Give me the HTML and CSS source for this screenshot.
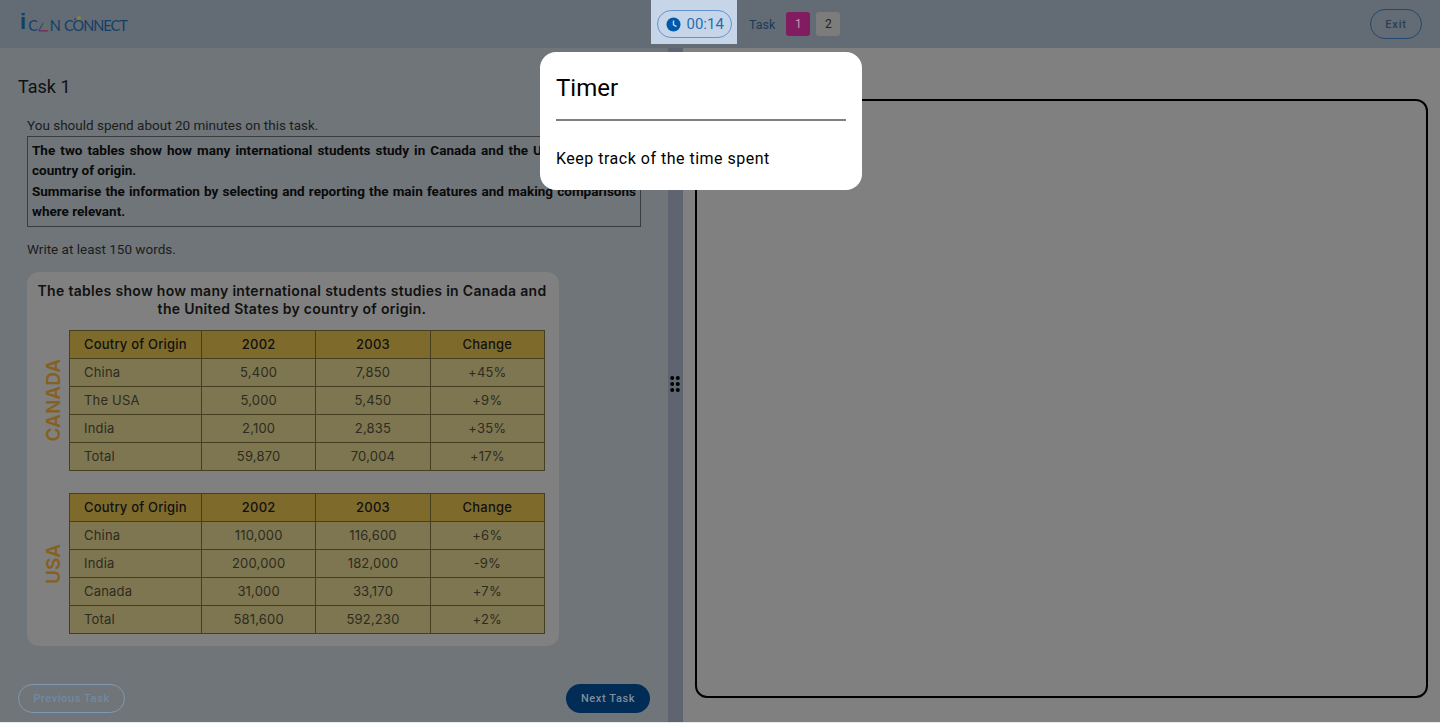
FILE: index.html
```html
<!DOCTYPE html>
<html>
<head>
    <title>Writing Test</title>
    <link rel="stylesheet" href="styles.css">
</head>
<body>
    <div class="app">
        <header class="topbar">
            <div class="logo">
                <span class="logo-i">i</span>
                <span class="logo-text">C<svg class="logo-a" viewBox="0 0 14 13" width="11" height="11"><path d="M1 12 7 1.5" stroke="#1f4e73" stroke-width="1.3" fill="none"/><path d="M7 1.5 13 12" stroke="#5f7f3a" stroke-width="1.3" fill="none"/><path d="M1 12H13" stroke="#801c5f" stroke-width="1.5" fill="none"/></svg>N<span class="logo-gap"></span><span class="logo-o">C<span class="logo-dots"></span>O</span>NNECT</span>
            </div>
            <div class="topbar-center">
                <div class="timer-spot">
                    <div class="timer-pill">
                        <svg viewBox="0 0 16 16" width="15" height="15"><circle cx="8" cy="8" r="7.5" fill="#0058ab"/><path d="M8 3.6V8.3L11.2 10.2" stroke="#c6d6e8" stroke-width="1.5" fill="none"/></svg>
                        <span>00:14</span>
                    </div>
                </div>
                <span class="task-label">Task</span>
                <button class="task-num active">1</button>
                <button class="task-num">2</button>
            </div>
            <button class="exit-btn">Exit</button>
        </header>

        <div class="main">
            <section class="left-panel">
                <h2 class="task-title">Task 1</h2>
                <div class="instructions">
                    <p class="spend">You should spend about 20 minutes on this task.</p>
                    <div class="question-box">
                        <p>The two tables show how many international students study in Canada and the United States by country of origin.</p>
                        <p>Summarise the information by selecting and reporting the main features and making comparisons where relevant.</p>
                    </div>
                    <p class="min-words">Write at least 150 words.</p>
                    <div class="chart-card">
                        <p class="chart-title">The tables show how many international students studies in Canada and<br>the United States by country of origin.</p>
                        <div class="chart-row">
                            <span class="country">CANADA</span>
                            <table class="chart-table">
                                <tr><th>Coutry of Origin</th><th>2002</th><th>2003</th><th>Change</th></tr>
                                <tr><td>China</td><td>5,400</td><td>7,850</td><td>+45%</td></tr>
                                <tr><td>The USA</td><td>5,000</td><td>5,450</td><td>+9%</td></tr>
                                <tr><td>India</td><td>2,100</td><td>2,835</td><td>+35%</td></tr>
                                <tr><td>Total</td><td>59,870</td><td>70,004</td><td>+17%</td></tr>
                            </table>
                        </div>
                        <div class="chart-row">
                            <span class="country">USA</span>
                            <table class="chart-table">
                                <tr><th>Coutry of Origin</th><th>2002</th><th>2003</th><th>Change</th></tr>
                                <tr><td>China</td><td>110,000</td><td>116,600</td><td>+6%</td></tr>
                                <tr><td>India</td><td>200,000</td><td>182,000</td><td>-9%</td></tr>
                                <tr><td>Canada</td><td>31,000</td><td>33,170</td><td>+7%</td></tr>
                                <tr><td>Total</td><td>581,600</td><td>592,230</td><td>+2%</td></tr>
                            </table>
                        </div>
                    </div>
                </div>
                <div class="task-nav">
                    <button class="nav-btn prev">Previous Task</button>
                    <button class="nav-btn next">Next Task</button>
                </div>
            </section>

            <div class="divider">
                <svg viewBox="0 0 10 16" width="10" height="16"><g fill="#000"><circle cx="2.2" cy="2" r="2"/><circle cx="7.8" cy="2" r="2"/><circle cx="2.2" cy="8" r="2"/><circle cx="7.8" cy="8" r="2"/><circle cx="2.2" cy="14" r="2"/><circle cx="7.8" cy="14" r="2"/></g></svg>
            </div>

            <section class="right-panel">
                <div class="answer-box"></div>
            </section>
        </div>

        <div class="tour-popover">
            <h3>Timer</h3>
            <p>Keep track of the time spent</p>
        </div>
    </div>
</body>
</html>
```

FILE: styles.css
```css
* {
    box-sizing: border-box;
}

html, body {
    margin: 0;
    height: 100%;
    overflow: hidden;
}

body {
    font-family: Roboto, Arial, sans-serif;
    background-color: #e9ecef;
}

button {
    font-family: Roboto, Arial, sans-serif;
    cursor: pointer;
}

.app {
    position: relative;
    height: 722px;
    display: flex;
    flex-direction: column;
}

/* top bar */
.topbar {
    height: 48px;
    flex: none;
    display: flex;
    align-items: flex-start;
    background-color: #636b74;
    padding: 0 18px 0 20px;
}

.logo {
    width: 631px;
    height: 48px;
    display: flex;
    align-items: center;
    gap: 2px;
    color: #123f66;
}

.logo-i {
    font-family: "Liberation Sans", sans-serif;
    font-weight: bold;
    font-size: 22px;
    line-height: 1;
    margin-top: -4px;
}

.logo-text {
    font-family: Lato, sans-serif;
    font-weight: 400;
    font-size: 14.5px;
    letter-spacing: -1px;
    line-height: 1;
    display: flex;
    align-items: center;
    white-space: pre;
    margin-top: 4px;
}

.logo-a {
    margin: 0 1px;
}

.logo-gap {
    width: 4px;
}

.logo-o {
    position: relative;
}

.logo-dots {
    position: absolute;
    top: -3px;
    right: 2px;
    width: 4px;
    height: 4px;
    border-radius: 50%;
    background-color: #6f8f3a;
    box-shadow: -4px 1px 0 -1px #801c5f;
}

.topbar-center {
    display: flex;
    align-items: center;
    height: 48px;
}

.timer-spot {
    align-self: flex-start;
    width: 86px;
    height: 44px;
    padding-top: 4px;
    background-color: #c6d6e8;
    display: flex;
    align-items: center;
    justify-content: center;
}

.timer-pill {
    width: 75px;
    height: 28px;
    border: 1px solid #5f94cf;
    border-radius: 14px;
    display: flex;
    align-items: center;
    gap: 6px;
    padding-left: 8px;
    font-size: 15px;
    color: #2a6cb0;
}

.task-label {
    margin: 0 11px 0 12px;
    font-size: 12.5px;
    color: #1c3a5c;
}

.task-num {
    width: 24px;
    height: 24px;
    margin-right: 6px;
    padding: 0;
    border: none;
    border-radius: 3px;
    font-size: 12px;
    background-color: #7c7c7c;
    color: #222;
}

.task-num.active {
    background-color: #801c5f;
    color: #c49ab5;
}

.exit-btn {
    margin: 9px 0 0 auto;
    width: 52px;
    height: 30px;
    border: 1px solid #23486e;
    border-radius: 15px;
    background: none;
    font-size: 11px;
    font-weight: 500;
    letter-spacing: 0.8px;
    color: #2a3f55;
}

/* panels */
.main {
    flex: 1;
    display: flex;
    min-height: 0;
}

.left-panel {
    width: 668px;
    flex: none;
    display: flex;
    flex-direction: column;
    padding: 0 18px 9px;
    background-color: #6f7579;
}

.task-title {
    margin: 28px 0 0;
    font-size: 18px;
    font-weight: 400;
    line-height: 22px;
    color: #111;
}

.instructions {
    padding-left: 9px;
}

.spend {
    margin: 17px 0 0;
    font-size: 13.5px;
    line-height: 20px;
    color: #1c1c1c;
}

.question-box {
    width: 614px;
    height: 91px;
    margin-top: 1px;
    padding: 3px 4px 0;
    border: 1px solid #3a3d40;
}

.question-box p {
    margin: 0;
    font-size: 13.5px;
    font-weight: 700;
    line-height: 20.3px;
    text-align: justify;
    color: #0a0a0a;
}

.min-words {
    margin: 12px 0 0;
    font-size: 13.5px;
    line-height: 20px;
    color: #1c1c1c;
}

.chart-card {
    width: 532px;
    height: 374px;
    margin-top: 13px;
    padding: 10px 14px 0 10px;
    border-radius: 12px;
    background-color: #808080;
}

.chart-title {
    margin: 0 -6px 12px -4px;
    font-family: Inter, sans-serif;
    font-size: 14px;
    font-weight: 600;
    letter-spacing: 0.3px;
    line-height: 18px;
    text-align: center;
    color: #111;
}

.chart-row {
    display: flex;
    align-items: center;
    margin-bottom: 22px;
}

.country {
    width: 32px;
    flex: none;
    writing-mode: vertical-rl;
    transform: rotate(180deg);
    display: flex;
    align-items: center;
    justify-content: center;
    font-family: Inter, sans-serif;
    font-size: 19px;
    font-weight: 600;
    color: #85601e;
}

.chart-table {
    width: 476px;
    height: 141px;
    table-layout: fixed;
    border-collapse: collapse;
    font-family: Inter, sans-serif;
    font-size: 13px;
    letter-spacing: 0.2px;
    background-color: #7d7650;
    color: #2e2b20;
}

.chart-table th, .chart-table td {
    border: 1px solid #453e20;
    padding: 0 0 2px;
    text-align: center;
    font-weight: 400;
}

.chart-table th {
    background-color: #7e6b2c;
    color: #111;
    font-weight: 500;
}

.chart-table th:first-child, .chart-table td:first-child {
    width: 132px;
    padding-left: 14px;
    text-align: left;
}

.task-nav {
    margin-top: auto;
    display: flex;
    justify-content: space-between;
    align-items: center;
}

.nav-btn {
    height: 29px;
    padding: 0;
    border-radius: 15px;
    font-size: 11px;
    font-weight: 500;
    letter-spacing: 0.6px;
}

.nav-btn.prev {
    width: 107px;
    background: none;
    border: 1px solid #7d9ab5;
    color: #7189a3;
}

.nav-btn.next {
    width: 84px;
    border: none;
    background-color: #002c55;
    color: #7f8c9b;
}

.divider {
    width: 15px;
    flex: none;
    display: flex;
    align-items: center;
    justify-content: center;
    padding: 0 1px 2px 0;
    background-color: #5f6570;
}

.right-panel {
    flex: 1;
    padding: 51px 12px 24px;
    background-color: #808080;
}

.answer-box {
    height: 599px;
    border: 2px solid #000;
    border-radius: 12px;
}

/* tour tooltip over the timer */
.tour-popover {
    position: absolute;
    top: 52px;
    left: 540px;
    width: 322px;
    height: 138px;
    padding: 16px;
    border-radius: 16px;
    background-color: #fff;
    color: #000;
}

.tour-popover h3 {
    margin: 0;
    padding-bottom: 11px;
    border-bottom: 2px solid #808080;
    font-size: 24px;
    font-weight: 400;
    line-height: 40px;
}

.tour-popover p {
    margin: 26px 0 0;
    font-size: 16px;
    line-height: 24px;
    letter-spacing: 0.5px;
}
```
